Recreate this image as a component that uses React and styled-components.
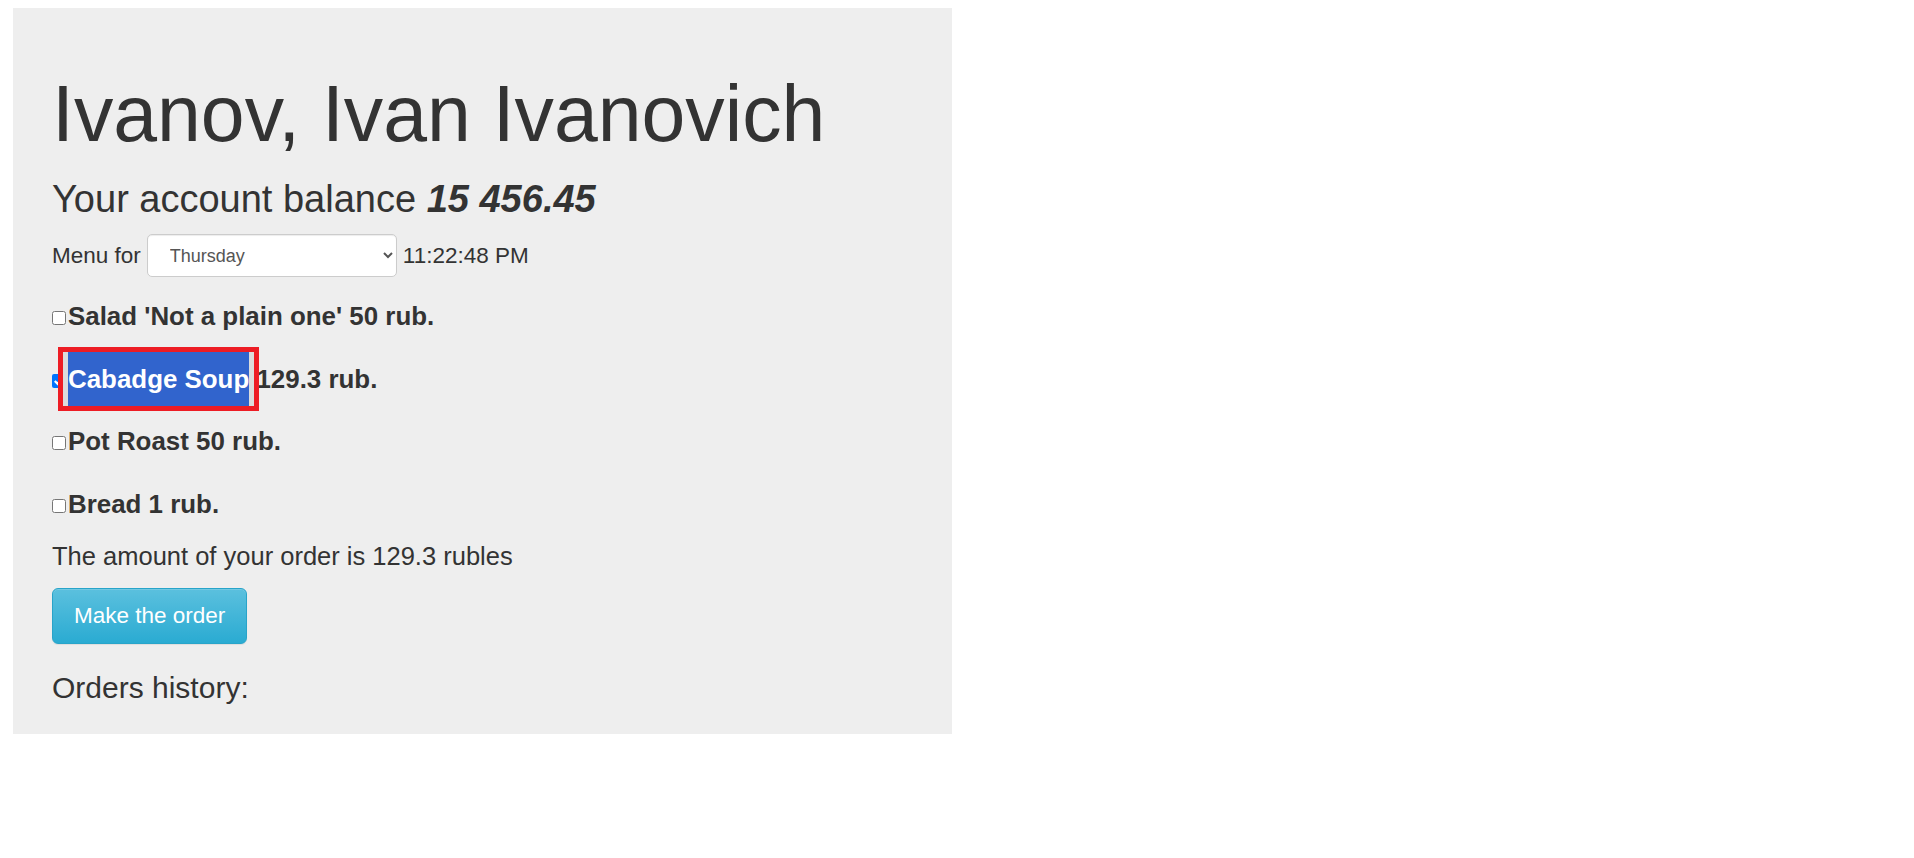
import React, { useState } from 'react'
import styled, { createGlobalStyle } from 'styled-components'

const GlobalStyle = createGlobalStyle`
  body {
    margin: 0;
    background: #fff;
    color: #333;
    font-family: "Liberation Sans", Arial, Helvetica, sans-serif;
  }
`;

const dishes = [
  { id: 1, name: "Salad 'Not a plain one'", price: 50 },
  { id: 2, name: 'Cabadge Soup', price: 129.3, selected: true },
  { id: 3, name: 'Pot Roast', price: 50 },
  { id: 4, name: 'Bread', price: 1 },
];

const App = () => {
  const [day, setDay] = useState('Thursday');
  const [checked, setChecked] = useState({ 2: true });

  const total = dishes
    .filter((d) => checked[d.id])
    .reduce((sum, d) => sum + d.price, 0);

  return (
    <Page>
      <GlobalStyle />
      <Jumbotron>
        <Title>Ivanov, Ivan Ivanovich</Title>
        <Balance>
          Your account balance <strong><i>15 456.45</i></strong>
        </Balance>

        <MenuRow>
          <span>Menu for</span>
          <DaySelect value={day} onChange={(e) => setDay(e.target.value)}>
            <option>Monday</option>
            <option>Tuesday</option>
            <option>Wednesday</option>
            <option>Thursday</option>
            <option>Friday</option>
          </DaySelect>
          <span>11:22:48 PM</span>
        </MenuRow>

        <Dishes>
          {dishes.map((d) => (
            <Dish key={d.id}>
              <Check
                type="checkbox"
                checked={!!checked[d.id]}
                onChange={() => setChecked({ ...checked, [d.id]: !checked[d.id] })}
              />
              {d.selected ? <Selected>{d.name}</Selected> : d.name} {d.price} rub.
            </Dish>
          ))}
        </Dishes>

        <Amount>The amount of your order is {Math.round(total * 10) / 10} rubles</Amount>
        <OrderButton>Make the order</OrderButton>
        <History>Orders history:</History>
      </Jumbotron>
    </Page>
  )
}

const Page = styled.div`
  padding: 8px 0 0 13px;
`;

const Jumbotron = styled.div`
  width: 939px;
  box-sizing: border-box;
  background: #eee;
  padding: 63px 39px 30px;
`;

const Title = styled.h1`
  margin: 0;
  font-size: 78.75px;
  line-height: 1.1;
  font-weight: 500;
`;

const Balance = styled.h2`
  margin: 21px 0 0;
  font-size: 38px;
  line-height: 1.1;
  font-weight: 500;
`;

const MenuRow = styled.div`
  display: flex;
  align-items: center;
  gap: 6px;
  margin-top: 14px;
  height: 43px;
  font-size: 22.5px;
`;

const DaySelect = styled.select`
  width: 250px;
  height: 43px;
  box-sizing: border-box;
  padding: 6px 12px 6px 18px;
  border: 1px solid #ccc;
  border-radius: 5px;
  background: #fff;
  color: #555;
  font-family: "Liberation Sans", Arial, sans-serif;
  font-size: 18px;
  box-shadow: inset 0 1px 1px rgba(0,0,0,0.075);
`;

const Dishes = styled.div`
  margin-top: 7.6px;
`;

const Dish = styled.label`
  display: block;
  line-height: 62.7px;
  font-size: 25.9px;
  font-weight: bold;
`;

const Check = styled.input`
  width: 14px;
  height: 14px;
  margin: 0 2px 0 0;
  vertical-align: baseline;
`;

const Selected = styled.span`
  position: relative;
  display: inline-block;
  line-height: 54px;
  background: #3164cd;
  color: #fff;
  &::before {
    content: '';
    position: absolute;
    top: 0;
    bottom: 0;
    left: -5px;
    right: -5px;
    border-left: 5px solid #dcdcdc;
    border-right: 5px solid #dcdcdc;
  }
  &::after {
    content: '';
    position: absolute;
    top: -5px;
    bottom: -5px;
    left: -10px;
    right: -10px;
    border: 5px solid #ed1c24;
  }
`;

const Amount = styled.p`
  margin: 2.5px 0 0;
  font-size: 25.5px;
  line-height: 37.5px;
  font-weight: 200;
`;

const OrderButton = styled.button`
  display: block;
  margin-top: 12.6px;
  height: 56px;
  padding: 0 21px;
  border: 1px solid #28a4c9;
  border-radius: 6px;
  background: linear-gradient(to bottom, #5bc0de 0%, #2aabd2 100%);
  color: #fff;
  font-family: "Liberation Sans", Arial, sans-serif;
  font-size: 22.5px;
  cursor: pointer;
  box-shadow: inset 0 1px 0 rgba(255,255,255,0.15), 0 1px 1px rgba(0,0,0,0.075);
`;

const History = styled.h3`
  margin: 27px 0 0;
  font-size: 30px;
  line-height: 1.1;
  font-weight: 500;
`;

export default App
